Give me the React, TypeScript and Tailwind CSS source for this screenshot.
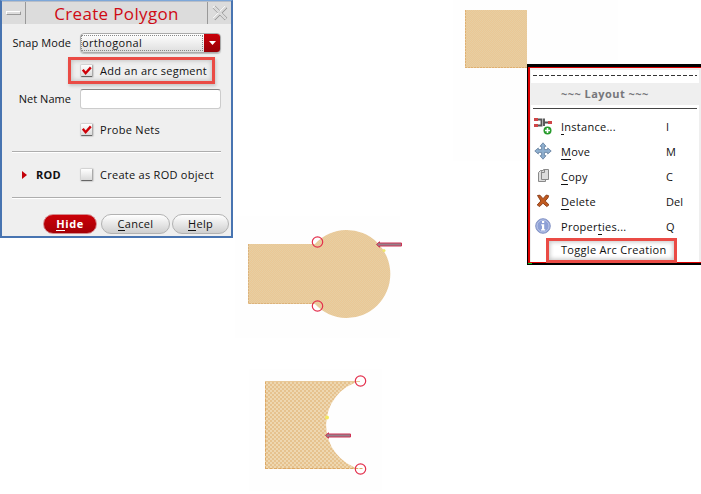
import React from "react";

const Check = ({ on = false }: { on?: boolean }) => (
  <span className="relative block h-3 w-3 shrink-0 rounded-[1px] border-b border-r border-b-[#666] border-r-[#aaa] bg-linear-to-b from-white to-[#dadada] shadow-[0_0_1px_1px_#d0d0d0]">
    {on && (
      <svg className="absolute left-0 top-0" width="12" height="12" viewBox="0 0 12 12">
        <path d="M1.8 4.8 L4.6 8.2 L9.8 2.4" fill="none" stroke="#cf0008" strokeWidth="2.4" />
      </svg>
    )}
  </span>
);

const U = ({ children }: { children: React.ReactNode }) => (
  <span className="border-b border-current">{children}</span>
);

const Rule = () => <div className="mx-[10px] h-[2px] border-t border-[#adadad] bg-white" />;

function Dialog() {
  return (
    <div className="absolute left-0 top-0 flex h-[238px] w-[233px] flex-col border-x-2 border-b-2 border-t border-[#4874b1] border-t-[#7da7d9] bg-[#efefef]">
      <div className="flex h-[23px] shrink-0 border-t border-[#b8bec8] bg-[#dcdcdc]">
        <div className="flex w-6 items-center justify-center border-r border-[#999]">
          <span className="h-[4px] w-[15px] border border-[#999] border-l-white border-t-white bg-[#ddd]" />
        </div>
        <div className="flex flex-1 items-center justify-center whitespace-nowrap text-[17px] leading-none tracking-[0.35px] text-[#cf0a14]">
          Create Polygon
        </div>
        <div className="flex w-6 items-center justify-center border-l border-[#999]">
          <svg width="16" height="16" viewBox="0 0 16 16" fill="none">
            <path d="M2 2 L14 14 M14 2 L2 14" stroke="#929292" strokeWidth="3.6" />
            <path d="M1.5 1.5 L13.5 13.5 M13.5 1.5 L1.5 13.5" stroke="#fff" strokeWidth="2.4" />
            <path d="M2 2 L14 14 M14 2 L2 14" stroke="#d8d8d8" strokeWidth="1.8" />
          </svg>
        </div>
      </div>

      <div className="mt-[9px] flex h-[19px] items-center">
        <span className="w-[69px] text-right tracking-[0.08px]">Snap Mode</span>
        <div className="ml-[9px] flex h-[20px] w-[141px] overflow-hidden rounded-[4px] border border-[#aaa] bg-linear-to-b from-white to-[#dedede] shadow-[0_1px_1px_#bbb]">
          <span className="my-px mr-px flex flex-1 items-center border border-dotted border-[#888] tracking-[0.35px]">orthogonal</span>
          <span className="flex w-4 items-center justify-center bg-linear-to-b from-[#c90009] to-[#970007]">
            <svg width="7" height="4" viewBox="0 0 7 4"><path d="M0 0H7L3.5 4Z" fill="#fff" /></svg>
          </span>
        </div>
      </div>

      <div className="ml-[66px] mt-[5px] flex h-[27px] w-[147px] items-center border-[3px] border-[#ea4b45] pl-[10px] shadow-[inset_0_0_4px_1px_#c5c5c5,1px_2px_3px_#c5c5c5]">
        <Check on />
        <span className="ml-[7px] whitespace-nowrap tracking-[0.27px]">Add an arc segment</span>
      </div>

      <div className="mt-[5px] flex h-[20px] items-center">
        <span className="w-[69px] text-right tracking-[0.04px]">Net Name</span>
        <div className="ml-[9px] h-[20px] w-[141px] rounded-[3px] border border-[#ccc] border-t-[#888] bg-white" />
      </div>

      <div className="mb-[11px] ml-[79px] mt-[11px] flex h-[20px] items-center">
        <Check on />
        <span className="ml-[7px] tracking-[0.3px]">Probe Nets</span>
      </div>
      <Rule />
      <div className="flex h-[44px] items-center">
        <svg className="ml-5" width="5" height="8" viewBox="0 0 5 8"><path d="M0 0L5 4L0 8Z" fill="#c30009" /></svg>
        <span className="ml-[9px] w-[45px] font-bold tracking-[0.3px]">ROD</span>
        <Check />
        <span className="ml-[7px] whitespace-nowrap tracking-[0.27px]">Create as ROD object</span>
      </div>
      <Rule />
      <div className="ml-[41px] mt-[15px] flex h-[20px] leading-[12px]">
        <span className="flex w-[54px] items-center justify-center rounded-full border border-[#d58b8e] bg-linear-to-b from-[#cb0007] to-[#a40006] font-bold tracking-[0.6px] text-white">
          <U>H</U>ide
        </span>
        <span className="ml-1 flex w-[69px] items-center justify-center rounded-full border border-[#b2b2b2] bg-linear-to-b from-white to-[#cfcfcf] tracking-[0.3px]">
          <U>C</U>ancel
        </span>
        <span className="ml-[2px] flex w-[57px] items-center justify-center rounded-full border border-[#b2b2b2] bg-linear-to-b from-white to-[#cfcfcf] tracking-[0.3px]">
          <U>H</U>elp
        </span>
      </div>
    </div>
  );
}

const InstanceIcon = () => (
  <svg width="18" height="18" viewBox="0 0 18 18" fill="none">
    <path d="M3 2.5H7.5V8.5H3M10 1.5V9M10.5 5.5H15" stroke="#555" strokeWidth="1.9" />
    <path d="M0 1h4v3H0zM0 7h4v3H0zM14 4h4v3h-4z" fill="#cf4548" />
    <circle cx="13.5" cy="13.5" r="4" fill="#279b2c" />
    <path d="M11 13.5H16M13.5 11V16" stroke="#fff" strokeWidth="1.6" />
  </svg>
);
const MoveIcon = () => (
  <svg width="18" height="18" viewBox="0 0 18 18">
    <path d="M9 .8L12 4.3H10.4V7.6H13.7V6L17.2 9L13.7 12V10.4H10.4V13.7H12L9 17.2L6 13.7H7.6V10.4H4.3V12L.8 9L4.3 6V7.6H7.6V4.3H6Z" fill="#8fb0d0" stroke="#6c87a5" strokeWidth=".9" />
  </svg>
);
const CopyIcon = () => (
  <svg width="18" height="18" viewBox="0 0 18 18" fill="#ddd" stroke="#898989">
    <path d="M4.5 5.5L6.5 3.5H11.5V14.5H4.5Z" />
    <path d="M7.5 4.5L9.5 2.5H14.5V12.5H7.5ZM7.5 5.5H10.5V2.5" />
  </svg>
);
const DeleteIcon = () => (
  <svg width="18" height="18" viewBox="0 0 18 18">
    <path d="M3.5 3.5L6 3.2L9 6.7L12.3 3L14.6 3.7L14 5.8L11.2 9L15 12.8L12.8 14.6L9 11.2L5.6 14.6L3.2 12.9L6.8 9Z" fill="#c05a20" stroke="#843713" strokeWidth=".9" />
  </svg>
);
const InfoIcon = () => (
  <svg width="18" height="18" viewBox="0 0 18 18">
    <circle cx="9" cy="9" r="7.3" fill="#8da0d6" stroke="#8796c6" strokeWidth="1" />
    <circle cx="9" cy="9" r="6" fill="none" stroke="#b9c5e8" strokeWidth="1" />
    <path d="M8 4h2.2v2H8zM7.2 7.3h3v5h1v1.2H7V12.3h1V8.5H7.2Z" fill="#fff" />
  </svg>
);

const items: { icon: React.ReactNode; label: React.ReactNode; shortcut: string }[] = [
  { icon: <InstanceIcon />, label: <><U>I</U>nstance...</>, shortcut: "I" },
  { icon: <MoveIcon />, label: <><U>M</U>ove</>, shortcut: "M" },
  { icon: <CopyIcon />, label: <><U>C</U>opy</>, shortcut: "C" },
  { icon: <DeleteIcon />, label: <><U>D</U>elete</>, shortcut: "Del" },
  { icon: <InfoIcon />, label: <>Proper<U>t</U>ies...</>, shortcut: "Q" },
];

function Menu() {
  return (
    <div className="absolute left-[527px] top-[64px] h-[201px] w-[174px] bg-black pl-px pt-[3px]">
      <div className="flex h-[196px] flex-col border-b border-l-2 border-t border-[#dc0000] bg-[#efefef] pl-px pr-[2px] pt-[2px]">
        <div className="h-[13px] shrink-0 bg-white px-[2px] pt-[5px]">
          <div className="h-px bg-[repeating-linear-gradient(to_right,#333_0,#333_4px,transparent_4px,transparent_6px)]" />
        </div>
        <div className="flex h-[22px] shrink-0 items-center pl-[30px] font-bold tracking-[0.45px] text-[#77777b]">~~~ Layout ~~~</div>
        <div className="min-h-0 flex-1 bg-white">
          <div className="mx-[2px] mb-[4px] mt-[3px] h-px bg-[#444]" />
          {items.map((it) => (
            <div key={it.shortcut} className="flex h-[25px] items-center leading-[12px]">
              <span className="ml-[3px] w-[27px]">{it.icon}</span>
              <span className="mt-[3px] w-[105px] tracking-[0.27px]">{it.label}</span>
              <span className="mt-[3px]">{it.shortcut}</span>
            </div>
          ))}
          <div className="ml-[15px] flex h-[25px] w-[131px] items-center whitespace-nowrap border-[3px] border-[#ea4b45] pb-px pl-[12px] tracking-[0.3px] shadow-[inset_0_0_4px_1px_#c5c5c5]">
            Toggle Arc Creation
          </div>
        </div>
      </div>
      <div className="h-px w-1 bg-[#00d020]" />
    </div>
  );
}

function Drawing() {
  return (
    <svg className="absolute left-0 top-0" width="701" height="494" viewBox="0 0 701 494" fill="none">
      <defs>
        <pattern id="weave" width="2" height="2" patternUnits="userSpaceOnUse">
          <path d="M0 0H2V2H0Z" fill="#ebc795" />
          <path d="M0 0H1V1H0ZM1 1H2V2H1Z" fill="#e6cfa3" />
        </pattern>
        <pattern id="dots" width="4" height="4" patternUnits="userSpaceOnUse">
          <path d="M0 0H4V4H0Z" fill="#e6c28e" />
          <path d="M0 0H2V2H0ZM2 2H4V4H2Z" fill="#eed7b0" />
        </pattern>
      </defs>
      <path d="M453 0H618V161H453ZM235 216H400V338H235ZM249 369H382V491H249Z" fill="#fefefe" />
      <path d="M465 10H527V68H465Z" fill="url(#weave)" />
      <path d="M465.5 10V68M465 67.5H527" stroke="#dfb071" strokeDasharray="2 1" />
      <path d="M248 244H315A43.5 44 0 1 1 315 304H248Z" fill="url(#weave)" />
      <path d="M248.5 244V303.5H315" stroke="#dcb37c" strokeDasharray="2 1" />
      <path d="M265 381H360A45.5 45.5 0 0 0 360 469H265Z" fill="url(#dots)" />
      <path d="M265.5 381V469M265 468.5H363" stroke="#dda865" strokeDasharray="3 1.5" />
      <path d="M265 381.5H360" stroke="#e8c999" />
      <circle cx="384" cy="250.5" r="1.5" fill="#f0e66b" />
      <circle cx="327" cy="417.5" r="2" fill="#f4e75e" />
      <g stroke="#e3304d" strokeWidth="1.2">
        <circle cx="317.5" cy="242" r="5.2" />
        <circle cx="317.5" cy="306" r="5.2" />
        <circle cx="360.5" cy="381" r="5.2" />
        <circle cx="360.5" cy="469" r="5.2" />
      </g>
      <g fill="#94808a" stroke="#cf3355">
        <path d="M376.5 244.5L379.5 241.8V243H401.5V246H379.5V247.2Z" />
        <path d="M325.5 435.5L328.5 432.8V434H350.5V437H328.5V438.2Z" />
      </g>
    </svg>
  );
}

export default function App() {
  return (
    <main className="relative h-[494px] w-[701px] overflow-hidden bg-white font-['Open_Sans',sans-serif] text-[11px] leading-[14px] text-[#111]">
      <Drawing />
      <Dialog />
      <Menu />
    </main>
  );
}
